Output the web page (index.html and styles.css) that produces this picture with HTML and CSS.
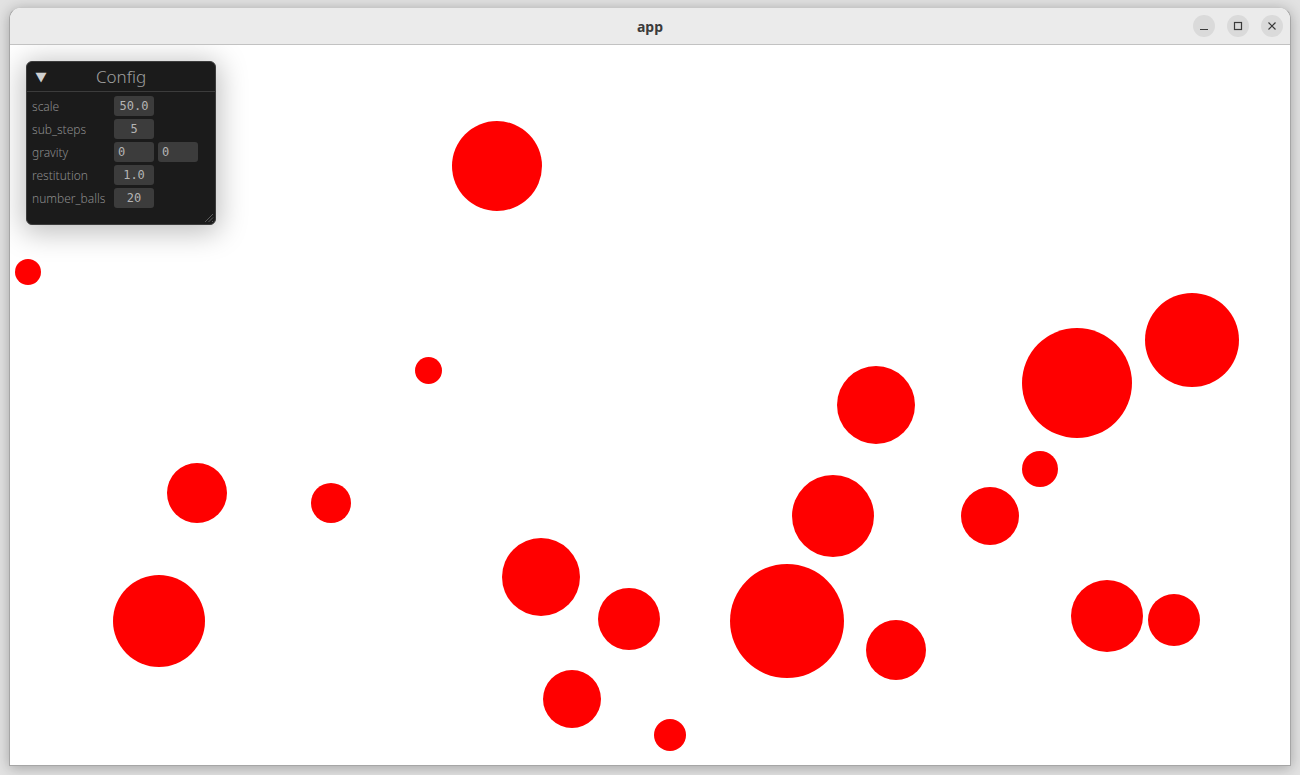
FILE: index.html
```html
<!DOCTYPE html>
<html>
<head>
<meta charset="utf-8">
<title>app</title>
<link rel="stylesheet" href="styles.css">
</head>
<body>
<div class="desktop">
  <div class="window">
    <div class="titlebar">
      <div class="title">app</div>
      <div class="controls">
        <div class="ctl"><svg width="12" height="12" viewBox="0 0 12 12"><path d="M2 9.5h8" stroke="#3a3a3a" stroke-width="1.2"/></svg></div>
        <div class="ctl"><svg width="12" height="12" viewBox="0 0 12 12"><rect x="2.5" y="2.5" width="7" height="7" fill="none" stroke="#3a3a3a" stroke-width="1.2"/></svg></div>
        <div class="ctl"><svg width="12" height="12" viewBox="0 0 12 12"><path d="M2.5 2.5l7 7M9.5 2.5l-7 7" stroke="#3a3a3a" stroke-width="1.2"/></svg></div>
      </div>
    </div>
    <div class="canvas">
      <div class="ball" style="left:442px;top:76px;width:90px;height:90px"></div>
      <div class="ball" style="left:5px;top:214px;width:26px;height:26px"></div>
      <div class="ball" style="left:405px;top:312px;width:27px;height:27px"></div>
      <div class="ball" style="left:827px;top:321px;width:78px;height:78px"></div>
      <div class="ball" style="left:1012px;top:283px;width:110px;height:110px"></div>
      <div class="ball" style="left:1135px;top:248px;width:94px;height:94px"></div>
      <div class="ball" style="left:1012px;top:406px;width:36px;height:36px"></div>
      <div class="ball" style="left:157px;top:418px;width:60px;height:60px"></div>
      <div class="ball" style="left:301px;top:438px;width:40px;height:40px"></div>
      <div class="ball" style="left:782px;top:430px;width:82px;height:82px"></div>
      <div class="ball" style="left:951px;top:442px;width:58px;height:58px"></div>
      <div class="ball" style="left:492px;top:493px;width:78px;height:78px"></div>
      <div class="ball" style="left:588px;top:543px;width:62px;height:62px"></div>
      <div class="ball" style="left:720px;top:519px;width:114px;height:114px"></div>
      <div class="ball" style="left:103px;top:530px;width:92px;height:92px"></div>
      <div class="ball" style="left:856px;top:575px;width:60px;height:60px"></div>
      <div class="ball" style="left:1061px;top:535px;width:72px;height:72px"></div>
      <div class="ball" style="left:1138px;top:549px;width:52px;height:52px"></div>
      <div class="ball" style="left:533px;top:625px;width:58px;height:58px"></div>
      <div class="ball" style="left:644px;top:674px;width:32px;height:32px"></div>

      <div class="panel">
        <div class="panel-head">
          <span class="tri">▼</span>
          <span class="panel-title">Config</span>
        </div>
        <div class="rows">
          <div class="row"><span class="label">scale</span><span class="val">50.0</span></div>
          <div class="row"><span class="label">sub_steps</span><span class="val">5</span></div>
          <div class="row"><span class="label">gravity</span><span class="val left">0</span><span class="val left">0</span></div>
          <div class="row"><span class="label">restitution</span><span class="val">1.0</span></div>
          <div class="row"><span class="label">number_balls</span><span class="val">20</span></div>
        </div>
        <svg class="grip" width="12" height="12" viewBox="0 0 12 12"><path d="M11 3L3 11M11 6.5L6.5 11M11 10L10 11" stroke="#5a5a5a" stroke-width="1"/></svg>
      </div>
    </div>
  </div>
</div>
</body>
</html>
```
FILE: styles.css
```css
html, body {
  margin: 0;
  padding: 0;
  width: 1300px;
  height: 775px;
  overflow: hidden;
  background: #e2e2e2;
}
.desktop {
  padding: 7px 9px 9px 9px;
}
.window {
  width: 1282px;
  height: 759px;
  box-sizing: border-box;
  border: 1px solid #a6a6a6;
  border-top-color: #c8c8c8;
  border-radius: 12px 12px 0 0;
  background: #ffffff;
  box-shadow: 0 2px 14px rgba(0,0,0,0.28);
  display: flex;
  flex-direction: column;
  overflow: hidden;
}
.titlebar {
  height: 37px;
  flex: none;
  box-sizing: border-box;
  background: #ebebeb;
  border-bottom: 1px solid #c2c2c2;
  display: flex;
  align-items: center;
  justify-content: center;
  position: relative;
}
.title {
  font-family: "Noto Sans", "DejaVu Sans", sans-serif;
  font-weight: 700;
  font-size: 14px;
  color: #3b3b3b;
  margin-top: 1px;
}
.controls {
  position: absolute;
  right: 7px;
  top: 7px;
  display: flex;
  gap: 12px;
}
.ctl {
  width: 22px;
  height: 22px;
  border-radius: 50%;
  background: #dadada;
  display: flex;
  align-items: center;
  justify-content: center;
}
.canvas {
  position: relative;
  flex: 1;
  background: #ffffff;
  overflow: hidden;
}
.ball {
  position: absolute;
  border-radius: 50%;
  background: #ff0000;
}
.panel {
  position: absolute;
  left: 16px;
  top: 16px;
  width: 190px;
  height: 164px;
  box-sizing: border-box;
  background: #1b1b1b;
  border: 1px solid #3c3c3c;
  border-radius: 6px;
  box-shadow: 0 4px 28px 4px rgba(0,0,0,0.25);
  display: flex;
  flex-direction: column;
}
.panel-head {
  height: 29px;
  flex: none;
  border-bottom: 1px solid #3c3c3c;
  display: flex;
  align-items: center;
  position: relative;
}
.tri {
  font-family: "DejaVu Sans", sans-serif;
  font-size: 13px;
  color: #d0d0d0;
  margin-left: 9px;
  transform: scaleX(1.1);
}
.panel-title {
  position: absolute;
  left: 0;
  right: 0;
  text-align: center;
  font-family: "Noto Sans", sans-serif;
  font-weight: 300;
  font-size: 17px;
  color: #a0a0a0;
  pointer-events: none;
}
.rows {
  display: flex;
  flex-direction: column;
  gap: 3px;
  padding: 4px 0 0 5px;
}
.row {
  display: flex;
  align-items: center;
  height: 20px;
  gap: 4px;
}
.label {
  width: 78px;
  font-family: "Noto Sans", sans-serif;
  font-weight: 300;
  font-size: 12px;
  color: #8c8c8c;
  white-space: nowrap;
}
.val {
  width: 40px;
  height: 20px;
  box-sizing: border-box;
  background: #3c3c3c;
  border-radius: 3px;
  font-family: "DejaVu Sans Mono", monospace;
  font-size: 12px;
  line-height: 20px;
  color: #b4b4b4;
  text-align: center;
}
.val.left {
  text-align: left;
  padding-left: 4px;
}
.grip {
  position: absolute;
  right: 1px;
  bottom: 1px;
}
```
